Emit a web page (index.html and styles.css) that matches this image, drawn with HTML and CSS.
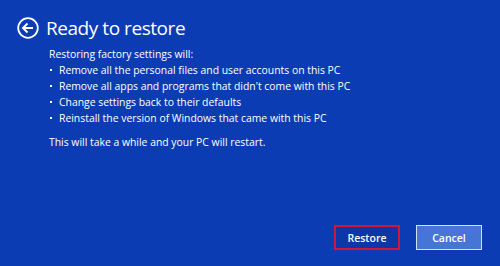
FILE: index.html
```html
<!DOCTYPE html>
<html>
<head>
<meta charset="utf-8">
<link rel="stylesheet" href="styles.css">
</head>
<body>
<div class="page">
  <div class="header">
    <svg class="back" width="22" height="22" viewBox="0 0 22 22">
      <circle cx="11" cy="11" r="9.8" fill="none" stroke="#fff" stroke-width="1.8"/>
      <path d="M6 11 H16 M10.5 6.5 L6 11 L10.5 15.5" fill="none" stroke="#fff" stroke-width="2" stroke-linecap="butt" stroke-linejoin="miter"/>
    </svg>
    <h1 class="title">Ready to restore</h1>
  </div>
  <div class="content">
    <p class="intro">Restoring factory settings will:</p>
    <ul class="list">
      <li>Remove all the personal files and user accounts on this PC</li>
      <li>Remove all apps and programs that didn't come with this PC</li>
      <li>Change settings back to their defaults</li>
      <li>Reinstall the version of Windows that came with this PC</li>
    </ul>
    <p class="note">This will take a while and your PC will restart.</p>
  </div>
  <div class="actions">
    <button class="btn btn-primary">Restore</button>
    <button class="btn btn-secondary">Cancel</button>
  </div>
</div>
</body>
</html>
```

FILE: styles.css
```css
html, body {
  margin: 0;
  padding: 0;
}
body {
  background: #0c3cb4;
  font-family: "Open Sans", "Noto Sans", sans-serif;
  color: #fff;
  width: 500px;
  height: 266px;
  overflow: hidden;
}
.page {
  height: 266px;
  display: flex;
  flex-direction: column;
  box-sizing: border-box;
  padding: 17px 18px 16px 17px;
}
.header {
  display: flex;
  align-items: center;
  gap: 7px;
  height: 22px;
}
.back {
  display: block;
  flex: none;
}
.title {
  margin: 0;
  font-weight: 400;
  font-size: 19px;
  line-height: 22px;
  letter-spacing: -0.45px;
}
.content {
  padding-left: 32px;
  padding-top: 7px;
  font-size: 10.4px;
  line-height: 16px;
}
.intro {
  margin: 0;
}
.list {
  margin: 0;
  padding: 0;
  list-style: none;
}
.list li {
  position: relative;
  padding-left: 10px;
}
.list li::before {
  content: "";
  position: absolute;
  left: 1px;
  top: 7px;
  width: 2px;
  height: 2px;
  background: #fff;
}
.note {
  margin: 8px 0 0;
}
.actions {
  margin-top: auto;
  display: flex;
  justify-content: flex-end;
  gap: 16px;
}
.btn {
  font-family: inherit;
  font-size: 10.5px;
  font-weight: 600;
  color: #fff;
  height: 25px;
  width: 66px;
  padding: 0;
  box-sizing: border-box;
  cursor: pointer;
}
.btn-primary {
  background: #0b37a8;
  border: 2px solid #d2153a;
  width: 66px;
}
.btn-secondary {
  background: #4775d6;
  border: 1.5px solid #d4e0fa;
}
```
